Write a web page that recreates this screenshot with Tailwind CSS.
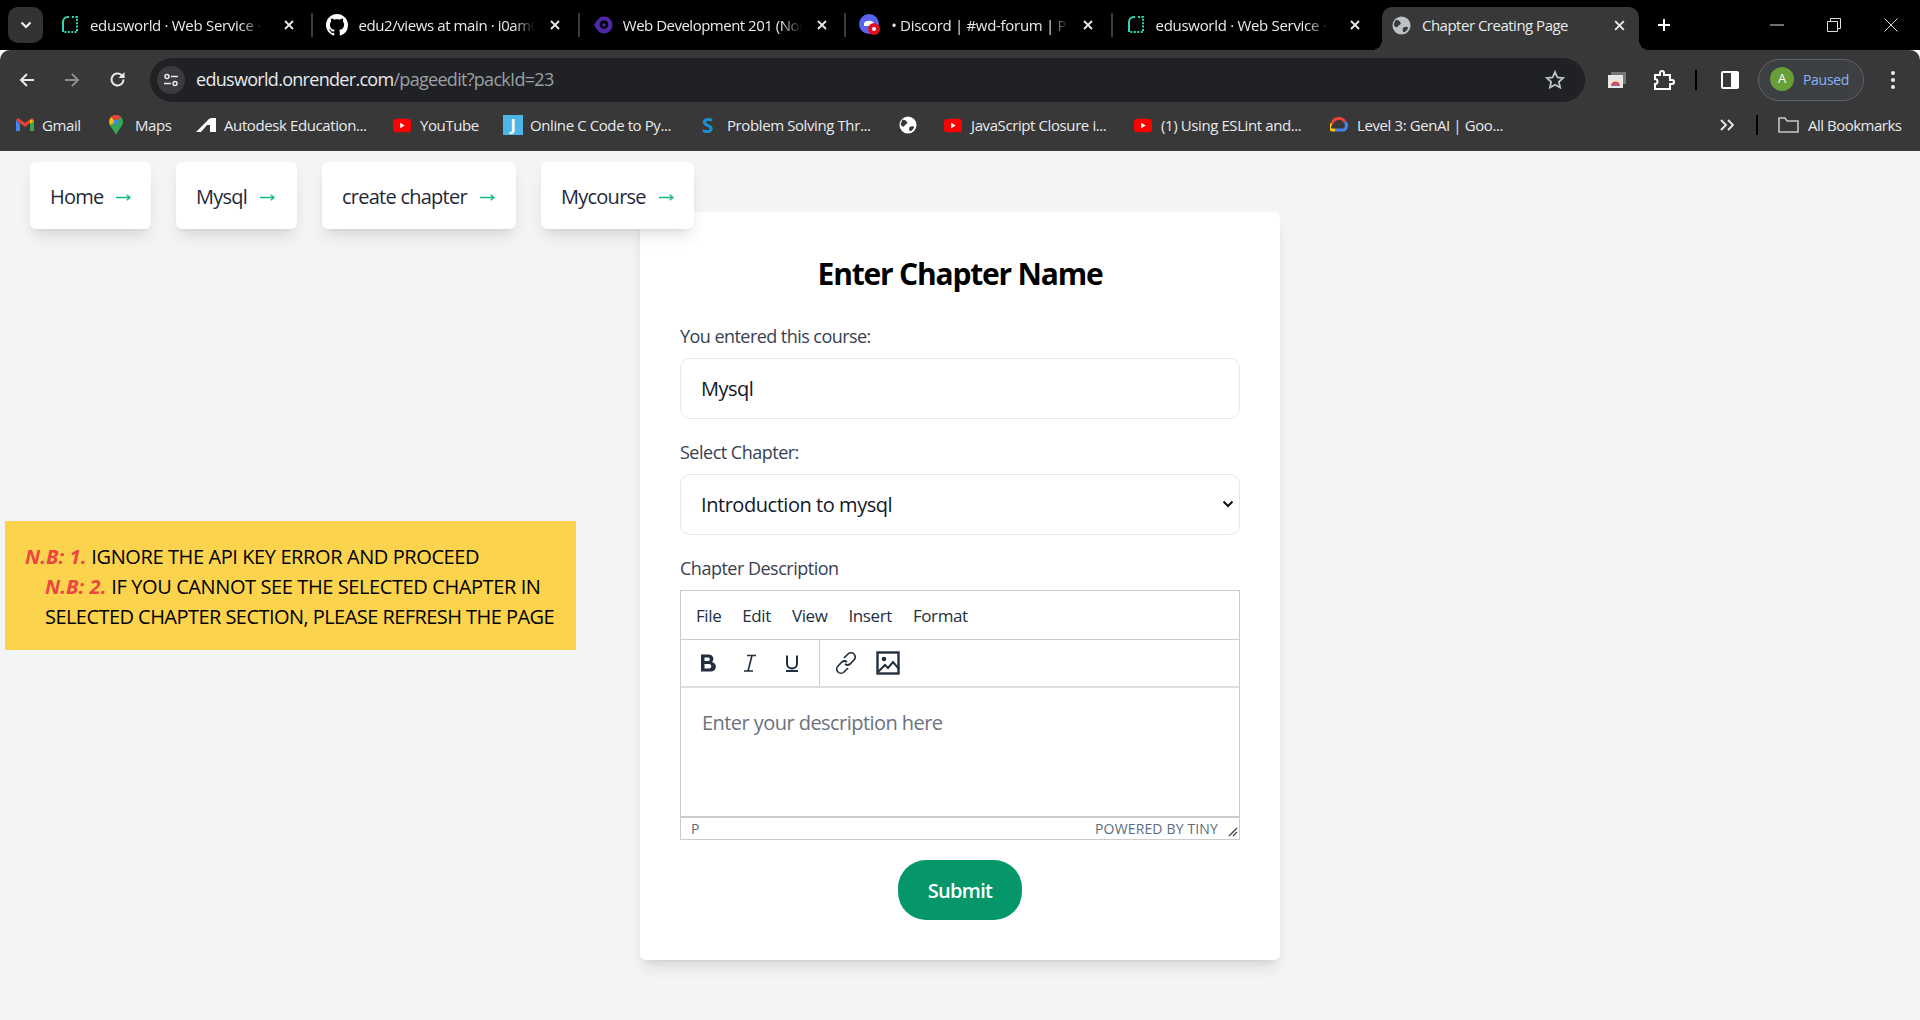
<!DOCTYPE html>
<html lang="en">
<head>
<meta charset="utf-8">
<title>Chapter Creating Page</title>
<script src="https://cdn.jsdelivr.net/npm/@tailwindcss/browser@4"></script>
</head>
<body class="bg-[#f3f4f6] font-['Open_Sans',sans-serif] overflow-hidden h-[1020px]">
<svg class="hidden">
  <symbol id="render" viewBox="0 0 20 20"><path d="M3 17V7a5 5 0 0 1 5-5h1" fill="none" stroke="#2fd6b5" stroke-width="2"/><path d="M12 2h5v15H3" fill="none" stroke="#2fd6b5" stroke-width="2" stroke-dasharray="2 1.4"/></symbol>
  <symbol id="yt" viewBox="0 0 20 16"><rect width="20" height="15" y=".5" rx="4" fill="#f00"/><path d="M8 5l5 3-5 3z" fill="#fff"/></symbol>
  <symbol id="x" viewBox="0 0 12 12"><path d="M2 2l8 8M10 2l-8 8" stroke="#e8eaed" stroke-width="1.8" fill="none"/></symbol>
  <symbol id="arrow" viewBox="0 0 14 8"><path d="M0 4h13M10 1.500L13 4l-3 2.500" fill="none" stroke="#10b981" stroke-width="1.200"/></symbol>
</svg>

<!-- tab strip -->
<div class="h-[50px] bg-black flex text-[15px] text-[#e8eaed]">
  <div class="w-[46px] pl-[8px] pt-[7px]">
    <div class="w-[35px] h-[36px] rounded-[10px] bg-[#333] flex items-center justify-center">
      <svg width="12" height="8" viewBox="0 0 12 8"><path d="M1.5 1.5L6 6l4.500-4.500" fill="none" stroke="#fff" stroke-width="2"/></svg>
    </div>
  </div>
  <div class="w-[266.4px] flex items-center pl-[14px] gap-[10px]">
    <svg class="w-[20px] h-[20px] shrink-0"><use href="#render"/></svg>
    <span class="w-[179px] whitespace-nowrap overflow-hidden [mask-image:linear-gradient(to_right,black_84%,transparent_97%)] tracking-[-0.3px]">edusworld · Web Service · Edusworld</span>
    <svg class="w-[12px] h-[12px] ml-[4px] shrink-0"><use href="#x"/></svg>
    <div class="ml-auto -mr-[1px] w-[2px] h-[24px] bg-[#3c3c3c]"></div>
  </div>
  <div class="w-[266.4px] flex items-center pl-[14px] gap-[10px]">
    <svg class="w-[22px] h-[22px] shrink-0" viewBox="0 0 16 16"><path fill="#fff" d="M8 0C3.580 0 0 3.580 0 8c0 3.540 2.290 6.530 5.470 7.590.4.070.55-.17.55-.38 0-.19-.01-.82-.01-1.490-2.010.37-2.530-.49-2.690-.94-.09-.23-.48-.94-.82-1.130-.28-.15-.68-.52-.01-.53.63-.01 1.080.58 1.230.82.720 1.210 1.870.87 2.330.66.070-.52.280-.87.510-1.070-1.780-.2-3.640-.89-3.640-3.950 0-.87.310-1.590.820-2.150-.08-.2-.36-1.020.08-2.120 0 0 .67-.21 2.200.82.640-.18 1.320-.27 2-.27s1.360.09 2 .27c1.530-1.040 2.200-.82 2.200-.82.440 1.100.16 1.920.08 2.120.51.560.82 1.270.82 2.150 0 3.070-1.870 3.750-3.650 3.950.29.250.54.730.54 1.480 0 1.070-.01 1.930-.01 2.200 0 .21.150.46.550.38A8.010 8.010 0 0 0 16 8c0-4.420-3.580-8-8-8z"/></svg>
    <span class="w-[177px] whitespace-nowrap overflow-hidden [mask-image:linear-gradient(to_right,black_88%,transparent)] tracking-[-0.4px]">edu2/views at main · i0am0arunava</span>
    <svg class="w-[12px] h-[12px] ml-[4px] shrink-0"><use href="#x"/></svg>
    <div class="ml-auto -mr-[1px] w-[2px] h-[24px] bg-[#3c3c3c]"></div>
  </div>
  <div class="w-[266.4px] flex items-center pl-[14px] gap-[10px]">
    <svg class="w-[20px] h-[20px] shrink-0" viewBox="0 0 20 20"><path d="M11 1.500a8.500 8.500 0 0 1 0 17c-3.500 0-7-2.500-10-8.500 3-6 6.500-8.500 10-8.500z" fill="#4f27a8"/><circle cx="11" cy="9.500" r="4.300" fill="#000"/><circle cx="11" cy="10" r="1.800" fill="#4f27a8"/></svg>
    <span class="w-[179px] whitespace-nowrap overflow-hidden [mask-image:linear-gradient(to_right,black_88%,transparent)] tracking-[-0.5px]">Web Development 201 (Node.js)</span>
    <svg class="w-[12px] h-[12px] ml-[4px] shrink-0"><use href="#x"/></svg>
    <div class="ml-auto -mr-[1px] w-[2px] h-[24px] bg-[#3c3c3c]"></div>
  </div>
  <div class="w-[266.4px] flex items-center pl-[14px] gap-[10px]">
    <svg class="w-[22px] h-[22px] shrink-0" viewBox="0 0 22 22"><circle cx="10" cy="10" r="10" fill="#5865f2"/><path d="M5 9c2-3 8-3 10 0v3H5z" fill="#fff"/><circle cx="15" cy="15" r="6" fill="#e01020"/><circle cx="15" cy="15" r="2" fill="#fff"/></svg>
    <span class="w-[177px] whitespace-nowrap overflow-hidden [mask-image:linear-gradient(to_right,black_90%,transparent)] tracking-[-0.3px]">• Discord | #wd-forum | Pupilfirst</span>
    <svg class="w-[12px] h-[12px] ml-[4px] shrink-0"><use href="#x"/></svg>
    <div class="ml-auto -mr-[1px] w-[2px] h-[24px] bg-[#3c3c3c]"></div>
  </div>
  <div class="w-[266.4px] flex items-center pl-[14px] gap-[10px]">
    <svg class="w-[20px] h-[20px] shrink-0"><use href="#render"/></svg>
    <span class="w-[179px] whitespace-nowrap overflow-hidden [mask-image:linear-gradient(to_right,black_84%,transparent_97%)] tracking-[-0.3px]">edusworld · Web Service · Edusworld</span>
    <svg class="w-[12px] h-[12px] ml-[4px] shrink-0"><use href="#x"/></svg>
  </div>
  <div class="w-[288px] pl-[4px] pt-[7px] flex">
    <div class="relative w-[257px] h-[43px] bg-[#383838] rounded-t-[10px] flex items-center pl-[10px] gap-[11px] pb-[6px]">
      <svg class="w-[19px] h-[19px] shrink-0" viewBox="0 0 20 20"><circle cx="10" cy="10" r="9.500" fill="#bdc1c6"/><path d="M4 4c2 0 4 1 5 3s-2 2-3 4-3 0-4-1c0-2 1-4 2-6zM12 12c2-1 4-1 5 0-1 3-3 5-5 5-1-2-1-3 0-5z" fill="#383838"/></svg>
      <span class="whitespace-nowrap tracking-[-0.5px]">Chapter Creating Page</span>
      <svg class="absolute left-[231px] top-[12px] w-[13px] h-[13px]"><use href="#x"/></svg>
      <div class="absolute -right-[10px] bottom-0 w-[10px] h-[10px] bg-[radial-gradient(circle_at_100%_0,transparent_10px,#383838_10px)]"></div>
      <div class="absolute -left-[10px] bottom-0 w-[10px] h-[10px] bg-[radial-gradient(circle_at_0_0,transparent_10px,#383838_10px)]"></div>
    </div>
  </div>
  <div class="flex items-center h-full">
    <svg width="14" height="14" viewBox="0 0 14 14" class="-ml-[9px]"><path d="M7 1v12M1 7h12" stroke="#fff" stroke-width="2"/></svg>
  </div>
  <div class="ml-auto flex items-center h-full pr-[22px] gap-[43px]">
    <svg width="14" height="14" viewBox="0 0 14 14"><path d="M0 7h14" stroke="#ddd" stroke-width="1"/></svg>
    <svg width="14" height="14" viewBox="0 0 14 14"><path d="M.5 3.500h10v10H.5z" fill="none" stroke="#ddd"/><path d="M3.500 3V.5h10v10H11" fill="none" stroke="#ddd"/></svg>
    <svg width="14" height="14" viewBox="0 0 14 14"><path d="M.5.500l13 13M13.500.500l-13 13" stroke="#ddd" stroke-width="1"/></svg>
  </div>
</div>

<!-- toolbar -->
<div class="h-[59px] bg-[#383838] rounded-t-[10px] flex items-center">
  <div class="w-[150px] flex items-center pl-[19px] gap-[29px]">
    <svg width="16" height="16" viewBox="0 0 16 16"><path d="M15 8H2M8 2L2 8l6 6" fill="none" stroke="#e8eaed" stroke-width="2"/></svg>
    <svg width="16" height="16" viewBox="0 0 16 16"><path d="M1 8h13M8 2l6 6-6 6" fill="none" stroke="#8b8c8e" stroke-width="2"/></svg>
    <svg width="17" height="17" viewBox="0 0 17 17"><path d="M14.500 8.500a6 6 0 1 1-1.800-4.300L15 6.500" fill="none" stroke="#e8eaed" stroke-width="2"/><path d="M15.500 1v6h-6z" fill="#e8eaed"/></svg>
  </div>
  <div class="w-[1435px] h-[44px] bg-[#202124] rounded-full flex items-center pl-[7px]">
    <div class="w-[28px] h-[28px] rounded-full bg-[#3a3b3d] flex items-center justify-center">
      <svg width="16" height="16" viewBox="0 0 16 16"><circle cx="4" cy="4.500" r="2" fill="none" stroke="#e8eaed" stroke-width="1.500"/><path d="M8 4.500h7M1 11.500h7" stroke="#e8eaed" stroke-width="1.500"/><circle cx="12" cy="11.500" r="2" fill="none" stroke="#e8eaed" stroke-width="1.500"/></svg>
    </div>
    <span class="ml-[11px] text-[18px] tracking-[-0.7px] text-[#e8eaed] whitespace-nowrap">edusworld.onrender.com<span class="text-[#9aa0a6]">/pageedit?packId=23</span></span>
    <svg class="ml-auto mr-[20px]" width="20" height="20" viewBox="0 0 20 20"><path d="M10 2l2.400 5.400 5.800.6-4.300 3.900 1.200 5.700-5.100-2.900-5.100 2.900 1.200-5.700L1.800 8l5.800-.6z" fill="none" stroke="#bdc1c6" stroke-width="1.800"/></svg>
  </div>
  <svg class="ml-[23px]" width="18" height="16" viewBox="0 0 18 16"><rect x="3" y="0" width="15" height="12" fill="#777"/><rect y="3" width="15" height="13" fill="#e8e8e8"/><path d="M3 14a4.500 4.500 0 0 1 9 0z" fill="#e8453c"/><path d="M5.500 14a2 2 0 0 1 4 0z" fill="#4285f4"/></svg>
  <svg class="ml-[27px]" width="22" height="22" viewBox="0 0 22 22"><path d="M2 6h5V4a2 2 0 0 1 4 0v2h6v5h2a2 2 0 0 1 0 4h-2v5H2v-5a2.500 2.500 0 0 0 0-5z" fill="none" stroke="#fff" stroke-width="2"/></svg>
  <div class="ml-[20px] w-[2px] h-[20px] bg-black"></div>
  <svg class="ml-[24px]" width="18" height="18" viewBox="0 0 18 18"><rect width="18" height="18" rx="2" fill="#fff"/><rect x="2" y="2" width="8" height="14" fill="#383838"/></svg>
  <div class="ml-[19px] w-[106px] h-[42px] rounded-full bg-[#3c4043] border border-[#5f6368] flex items-center pl-[11px] gap-[9px] pb-[1px]">
    <div class="w-[24px] h-[24px] rounded-full bg-[#689f38] text-white text-[13px] flex items-center justify-center">A</div>
    <span class="text-[#8ab4f8] text-[14px] tracking-[-0.3px]">Paused</span>
  </div>
  <svg class="ml-[26px]" width="6" height="20" viewBox="0 0 6 20"><circle cx="3" cy="3" r="2" fill="#e8eaed"/><circle cx="3" cy="10" r="2" fill="#e8eaed"/><circle cx="3" cy="17" r="2" fill="#e8eaed"/></svg>
</div>

<!-- bookmarks -->
<div class="h-[42px] pb-[10px] bg-[#383838] flex items-center text-[15px] tracking-[-0.4px] text-[#e8eaed] whitespace-nowrap">
  <div class="w-[109px] pl-[16px] flex items-center gap-[8px]">
    <svg width="18" height="14" viewBox="0 0 18 14"><path d="M0 2v11h4V6z" fill="#4285f4"/><path d="M14 6v7h4V2z" fill="#34a853"/><path d="M0 2l9 7 9-7-2-2-7 5-7-5z" fill="#ea4335"/><path d="M14 1.500V6l4-3z" fill="#fbbc04"/></svg><span>Gmail</span>
  </div>
  <div class="w-[87px] flex items-center gap-[12px]">
    <svg width="14" height="20" viewBox="0 0 14 20"><path d="M7 0a7 7 0 0 1 7 7c0 4-5 8-7 13C5 15 0 11 0 7a7 7 0 0 1 7-7z" fill="#34a853"/><path d="M2 2l5 5-6 3C0 7 0 4 2 2z" fill="#fbbc04"/><path d="M2 2a7 7 0 0 1 10 0L7 7z" fill="#ea4335"/><circle cx="7" cy="7" r="2.500" fill="#4285f4"/></svg><span>Maps</span>
  </div>
  <div class="w-[197px] flex items-center gap-[8px]">
    <svg width="20" height="14" viewBox="0 0 20 14"><path d="M0 14L12 2c2-2 3-2 8-2v14h-6V7H11L5 14z" fill="#fff"/></svg><span>Autodesk Education...</span>
  </div>
  <div class="w-[110px] flex items-center gap-[9px]">
    <svg width="18" height="15"><use href="#yt"/></svg><span>YouTube</span>
  </div>
  <div class="w-[199px] flex items-center gap-[7px]">
    <span class="w-[20px] h-[20px] bg-[#4db6e8] text-white font-bold text-[16px] flex items-center justify-center">J</span><span>Online C Code to Py...</span>
  </div>
  <div class="w-[197px] flex items-center gap-[10px]">
    <span class="w-[15px] text-[#1b8fd2] font-bold text-[21px] leading-[20px]">S</span><span>Problem Solving Thr...</span>
  </div>
  <div class="w-[45px] flex items-center">
    <svg width="18" height="18" viewBox="0 0 20 20"><circle cx="10" cy="10" r="9.500" fill="#fff"/><path d="M4 4c2 0 4 1 5 3s-2 2-3 4-3 0-4-1c0-2 1-4 2-6zM12 12c2-1 4-1 5 0-1 3-3 5-5 5-1-2-1-3 0-5z" fill="#383838"/></svg>
  </div>
  <div class="w-[190px] flex items-center gap-[9px]">
    <svg width="18" height="15"><use href="#yt"/></svg><span>JavaScript Closure i...</span>
  </div>
  <div class="w-[196px] flex items-center gap-[9px]">
    <svg width="18" height="15"><use href="#yt"/></svg><span>(1) Using ESLint and...</span>
  </div>
  <div class="w-[390px] flex items-center gap-[9px]">
    <svg width="18" height="16" viewBox="0 0 18 16"><path d="M5 13H3a3 3 0 0 1-1-6" fill="none" stroke="#fbbc04" stroke-width="3"/><path d="M2 7a7 7 0 0 1 13-2" fill="none" stroke="#ea4335" stroke-width="3"/><path d="M15 5c3 3 1 8-2 8H5" fill="none" stroke="#4285f4" stroke-width="3"/></svg><span>Level 3: GenAI | Goo...</span>
  </div>
  <svg width="14" height="12" viewBox="0 0 14 12"><path d="M1 1l5 5-5 5M8 1l5 5-5 5" fill="none" stroke="#e8eaed" stroke-width="1.800"/></svg>
  <div class="ml-[22px] w-[2px] h-[20px] bg-black"></div>
  <svg class="ml-[20px]" width="21" height="16" viewBox="0 0 21 16"><path d="M1 15V1h6l2 3h11v11z" fill="none" stroke="#c4c7c5" stroke-width="1.600"/></svg>
  <span class="ml-[9px] tracking-[-0.5px]">All Bookmarks</span>
</div>

<!-- page -->
<div class="pt-[11px]">
  <nav class="relative z-10 h-[67px] -mb-[17px] pl-[30px] flex gap-[25px] text-[20px] tracking-[-0.75px] text-[#1f2937] whitespace-nowrap">
    <a class="w-[121px] h-[67px] pt-[2px] bg-white rounded-md shadow-lg flex items-center pl-[20px] gap-[12px]">Home <svg class="w-[15px] h-[9px] mt-[2px]"><use href="#arrow"/></svg></a>
    <a class="w-[121px] h-[67px] pt-[2px] bg-white rounded-md shadow-lg flex items-center pl-[20px] gap-[13px]">Mysql <svg class="w-[15px] h-[9px] mt-[2px]"><use href="#arrow"/></svg></a>
    <a class="w-[194px] h-[67px] pt-[2px] bg-white rounded-md shadow-lg flex items-center pl-[20px] gap-[13px]">create chapter <svg class="w-[15px] h-[9px] mt-[2px]"><use href="#arrow"/></svg></a>
    <a class="w-[153px] h-[67px] pt-[2px] bg-white rounded-md shadow-lg flex items-center pl-[20px] gap-[13px]">Mycourse <svg class="w-[15px] h-[9px] mt-[2px]"><use href="#arrow"/></svg></a>
  </nav>
  <div class="flex">
    <aside class="w-[640px] pl-[5px] pt-[309px]">
      <div class="w-[571px] h-[129px] bg-[#fcd34d] pt-[21px] pl-[20px] text-[20px] leading-[30px] tracking-[-0.4px] text-black whitespace-nowrap">
        <div><b class="italic text-[#ef4444] tracking-[0.1px]">N.B: 1.</b> IGNORE THE API KEY ERROR AND PROCEED</div>
        <div class="pl-[20px]"><b class="italic text-[#ef4444] tracking-[0.1px]">N.B: 2.</b> IF YOU CANNOT SEE THE SELECTED CHAPTER IN<br><span class="tracking-[-0.55px]">SELECTED CHAPTER SECTION, PLEASE REFRESH THE PAGE</span></div>
      </div>
    </aside>
    <main class="w-[640px] h-[748px] bg-white rounded-md shadow-lg px-[40px] pt-[40px]">
      <h1 class="text-center text-[30px] leading-[44px] font-bold tracking-[-1.2px] text-black">Enter Chapter Name</h1>
      <label class="block mt-[26px] text-[18px] leading-[28px] tracking-[-0.55px] text-[#374151]">You entered this course:</label>
      <div class="mt-[8px] h-[61px] rounded-[10px] border border-[#e5e7eb] flex items-center pl-[20px] text-[20px] tracking-[-0.5px] text-[#111827]">Mysql</div>
      <label class="block mt-[19px] text-[18px] leading-[28px] tracking-[-0.5px] text-[#374151]">Select Chapter:</label>
      <div class="relative mt-[8px]">
        <select class="block appearance-none w-full h-[61px] rounded-[10px] border border-[#e5e7eb] bg-white pl-[20px] pr-[30px] text-[20px] tracking-[-0.45px] text-[#111827]">
          <option>Introduction to mysql</option>
        </select>
        <svg class="absolute right-[6px] top-[26px] pointer-events-none" width="12" height="8" viewBox="0 0 12 8"><path d="M1.500 1.500L6 6l4.500-4.500" fill="none" stroke="#111" stroke-width="2"/></svg>
      </div>
      <label class="block mt-[19px] text-[18px] leading-[28px] tracking-[-0.5px] text-[#374151]">Chapter Description</label>
      <div class="mt-[8px] h-[250px] border border-[#ccc] flex flex-col text-[#222f3e]">
        <div class="h-[49px] pt-[1px] border-b border-[#ccc] flex items-center pl-[15px] gap-[21px] text-[17px] tracking-[-0.4px]">
          <span>File</span><span>Edit</span><span>View</span><span>Insert</span><span>Format</span>
        </div>
        <div class="h-[48px] border-b-2 border-[#ddd] flex items-center">
          <div class="w-[139px] h-full border-r border-[#ccc] flex items-center pl-[18px] gap-[25px]">
            <svg width="18" height="20" viewBox="0 0 18 20"><path d="M2 1.500h8a4.300 4.300 0 0 1 3 7.500 4.800 4.800 0 0 1-2 9.500H2zM5.500 4.500V8h4a1.800 1.800 0 0 0 0-3.500zM5.500 11v4.500h5a2.300 2.300 0 0 0 0-4.500z" fill="#222f3e" fill-rule="evenodd"/></svg>
            <svg width="16" height="20" viewBox="0 0 16 20"><path d="M5 2.500h9M2 18h9M10 2.500L6 18" stroke="#222f3e" stroke-width="1.600" fill="none"/></svg>
            <svg width="18" height="20" viewBox="0 0 18 20"><path d="M4 2.500v8a5 5 0 0 0 10 0v-8" stroke="#222f3e" stroke-width="2" fill="none"/><path d="M3 18h12" stroke="#222f3e" stroke-width="2"/></svg>
          </div>
          <div class="flex items-center pl-[14px] gap-[18px]">
            <svg width="24" height="24" viewBox="0 0 24 24"><path d="M10 7l4-4a4 4 0 0 1 6 6l-4 4a4 4 0 0 1-5 0M14 17l-4 4a4 4 0 0 1-6-6l4-4a4 4 0 0 1 5 0" fill="none" stroke="#222f3e" stroke-width="1.700"/></svg>
            <svg width="24" height="24" viewBox="0 0 24 24"><rect x="1.500" y="1.500" width="21" height="21" fill="none" stroke="#222f3e" stroke-width="2.400"/><circle cx="8" cy="8" r="2.300" fill="#222f3e"/><path d="M2 21l7-7 3 3 5-6 6 7" fill="none" stroke="#222f3e" stroke-width="2"/></svg>
          </div>
        </div>
        <div class="h-[128px] pl-[21px] pt-[21px] text-[20px] leading-[28px] tracking-[-0.55px] text-[#6b7280]">Enter your description here</div>
        <div class="relative h-[22px] border-t-2 border-[#ccc] flex items-center px-[10px] text-[14px] tracking-[0.15px] text-[#5d6b7d]">
          <span>P</span><span class="ml-auto mr-[11px]">POWERED BY TINY</span>
          <svg class="absolute right-[1px] bottom-[1px]" width="10" height="10" viewBox="0 0 10 10"><path d="M1 9l8-8M5 9l4-4" stroke="#444" stroke-width="1.300"/></svg>
        </div>
      </div>
      <div class="flex justify-center mt-[20px]">
        <button class="w-[124px] h-[60px] pt-[1px] rounded-[28px] bg-[#059669] text-white text-[20px] font-semibold tracking-[-0.7px]">Submit</button>
      </div>
    </main>
  </div>
</div>
</body>
</html>
